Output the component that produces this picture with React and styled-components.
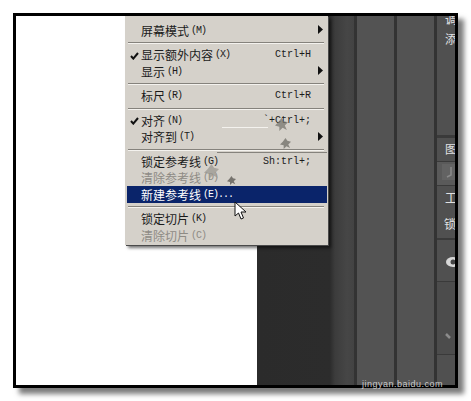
import styled, { createGlobalStyle } from "styled-components";

const GlobalStyle = createGlobalStyle`
  html, body {
    margin: 0;
    padding: 0;
    background: #fff;
  }
`;

const Page = styled.div`
  width: 471px;
  height: 401px;
  padding: 13px;
  box-sizing: border-box;
  background: #fff;
  overflow: hidden;
`;

const Frame = styled.div`
  position: relative;
  width: 445px;
  height: 375px;
  box-sizing: border-box;
  border: 3px solid #000;
  display: flex;
  box-shadow: 6px 6px 5px #7c7c7c;
`;

const Canvas = styled.div`
  flex: none;
  width: 241px;
  background: #fff;
`;

const Workspace = styled.div`
  flex: 1;
  min-width: 0;
  display: flex;
  background: #2b2b2b;
`;

const Pasteboard = styled.div`
  flex: none;
  width: 97px;
  background: linear-gradient(
    to right,
    #2b2b2b 0,
    #2c2c2c 73px,
    #3c3c3c 78px,
    #464646 90px,
    #434343 97px
  );
`;

const Divider = styled.div`
  flex: none;
  width: 3px;
  background: #333;
`;

const Column = styled.div`
  flex: none;
  width: 37px;
  background: #535353;
`;

const Panel = styled.div`
  flex: 1;
  min-width: 0;
  display: flex;
  flex-direction: column;
  background: #505050;
  overflow: hidden;
  font-family: "Noto Sans CJK SC", sans-serif;
  font-size: 12px;
  color: #e2e2e2;
`;

const PanelRow = styled.div`
  flex: none;
  height: ${(p) => p.$h}px;
  box-sizing: border-box;
  padding-left: ${(p) => p.$indent || 8}px;
  line-height: ${(p) => p.$lh || p.$h}px;
  background: ${(p) => p.$bg || "transparent"};
  border-bottom: ${(p) => (p.$line ? `${p.$line}px solid #3a3a3a` : "none")};
  white-space: nowrap;
  overflow: hidden;
`;

const PanelGlyphs = styled.div`
  margin-top: -7px;
  line-height: 20px;
`;

const PanelIcon = styled.svg`
  display: block;
`;

const Menu = styled.div`
  position: absolute;
  left: 109px;
  top: 0;
  width: 203px;
  height: 229px;
  box-sizing: border-box;
  padding: 6.3px 1px 1px 2px;
  background: #d5d1ca;
  box-shadow: 1px 1px 0 #4a4a4a, 3px 3px 3px rgba(0, 0, 0, 0.55);
  font-family: "Noto Sans CJK SC", sans-serif;
  font-size: 12px;
`;

const Item = styled.div`
  position: relative;
  height: 16.5px;
  line-height: 16px;
  display: flex;
  align-items: center;
  padding-left: 14px;
  white-space: nowrap;
  color: ${(p) => (p.$active ? "#fff" : p.$disabled ? "#8e8b85" : "#1a1a1a")};
  background: ${(p) => (p.$active ? "#0a246a" : "transparent")};
`;

const Key = styled.span`
  font-family: "Liberation Mono", monospace;
  font-size: 10px;
  letter-spacing: -1px;
  margin-left: 2px;
`;

const Shortcut = styled.span`
  position: absolute;
  right: 16px;
  font-family: "Liberation Mono", monospace;
  font-size: 10px;
`;

const Check = styled.svg`
  position: absolute;
  left: 3px;
  top: 5px;
`;

const Arrow = styled.svg`
  position: absolute;
  right: 4px;
  top: 3px;
`;

const Separator = styled.div`
  height: 8px;
  display: flex;
  align-items: center;
  &::before {
    content: "";
    flex: 1;
    margin: 0 3px 0 1px;
    height: 1px;
    background: #85827c;
    box-shadow: 0 1px 0 #f4f2ee;
  }
`;

// stray marks left over from the watermark
const Stain = styled.svg`
  position: absolute;
  left: ${(p) => p.$x}px;
  top: ${(p) => p.$y}px;
`;

const Streak = styled.div`
  position: absolute;
  left: ${(p) => p.$x}px;
  top: ${(p) => p.$y}px;
  width: ${(p) => p.$w}px;
  height: 1px;
  background: ${(p) => p.$color};
`;

const Pointer = styled.svg`
  position: absolute;
  left: 218px;
  top: 185px;
`;

const Credit = styled.span`
  position: absolute;
  left: 346px;
  bottom: -4px;
  font-family: "Liberation Sans", sans-serif;
  font-size: 9px;
  line-height: 9px;
  color: #c9c9c9;
  white-space: nowrap;
  letter-spacing: 0.5px;
`;

const MenuArrow = () => (
  <Arrow width="5" height="9" viewBox="0 0 5 9">
    <path d="M0 0 L5 4.5 L0 9 Z" fill="#111" />
  </Arrow>
);

const MenuCheck = () => (
  <Check width="9" height="8" viewBox="0 0 9 8">
    <path d="M1 4 L3.3 6.6 L8 1" fill="none" stroke="#111" strokeWidth="2" />
  </Check>
);

const Blob = ({ x, y, size = 12, color = "#77756f" }) => (
  <Stain $x={x} $y={y} width={size} height={size} viewBox="0 0 12 12">
    <path
      d="M6 0 L8 3 L12 4 L9 7 L11 11 L7 9 L4 12 L4 8 L0 7 L3 4 Z"
      fill={color}
      opacity="0.75"
    />
  </Stain>
);

export default function App() {
  return (
    <Page>
      <GlobalStyle />
      <Frame>
        <Canvas />
        <Workspace>
          <Pasteboard />
          <Divider />
          <Column />
          <Divider />
          <Column />
          <Divider />
          <Panel>
            <PanelRow $h={122} $line={3}>
              <PanelGlyphs>
                调
                <br />
                添
              </PanelGlyphs>
            </PanelRow>
            <PanelRow $h={24} $lh={22} $line={1}>图</PanelRow>
            <PanelRow $h={24} $indent={5} $line={1} $bg="#5a5a5a">
              <PanelIcon width="13" height="20" viewBox="0 0 13 20">
                <rect x="0" y="2" width="13" height="16" fill="#636363" />
                <path d="M9 5 V13 L5 15" fill="none" stroke="#8a8a8a" strokeWidth="1.5" />
              </PanelIcon>
            </PanelRow>
            <PanelRow $h={24} $lh={24}>工</PanelRow>
            <PanelRow $h={30} $lh={28} $indent={7} $line={2}>锁</PanelRow>
            <PanelRow $h={42} $indent={8} $line={1}>
              <PanelIcon width="12" height="42" viewBox="0 0 12 42">
                <ellipse cx="8" cy="22" rx="7" ry="5" fill="#d8d8d8" />
                <circle cx="8" cy="22" r="2.5" fill="#444" />
              </PanelIcon>
            </PanelRow>
            <PanelRow $h={73} $indent={8} $line={1} $bg="#4c4c4c">
              <PanelIcon width="10" height="72" viewBox="0 0 10 72">
                <path d="M1 52 L5 56" stroke="#8c8c8c" strokeWidth="2.5" />
              </PanelIcon>
            </PanelRow>
            <PanelRow $h={30} />
          </Panel>
        </Workspace>

        <Menu>
          <Item>
            屏幕模式<Key>(M)</Key>
            <MenuArrow />
          </Item>
          <Separator />
          <Item>
            <MenuCheck />
            显示额外内容<Key>(X)</Key>
            <Shortcut>Ctrl+H</Shortcut>
          </Item>
          <Item>
            显示<Key>(H)</Key>
            <MenuArrow />
          </Item>
          <Separator />
          <Item>
            标尺<Key>(R)</Key>
            <Shortcut>Ctrl+R</Shortcut>
          </Item>
          <Separator />
          <Item>
            <MenuCheck />
            对齐<Key>(N)</Key>
            <Shortcut>`+Ctrl+;</Shortcut>
          </Item>
          <Item>
            对齐到<Key>(T)</Key>
            <MenuArrow />
          </Item>
          <Separator />
          <Item>
            锁定参考线<Key>(G)</Key>
            <Shortcut>Sh:trl+;</Shortcut>
          </Item>
          <Item $disabled>
            清除参考线<Key>(D)</Key>
          </Item>
          <Item $active>
            新建参考线<Key>(E)...</Key>
          </Item>
          <Separator />
          <Item>
            锁定切片<Key>(K)</Key>
          </Item>
          <Item $disabled>
            清除切片<Key>(C)</Key>
          </Item>
        </Menu>

        <Streak $x={206} $y={111} $w={46} $color="#f4f2ee" />
        <Streak $x={201} $y={136} $w={110} $color="#85827c" />
        <Blob x={259} y={102} size={13} />
        <Blob x={264} y={122} size={11} color="#6e6c66" />
        <Blob x={188} y={148} size={15} color="#9a9790" />
        <Blob x={211} y={160} size={9} color="#55534e" />

        <Pointer width="14" height="20" viewBox="0 0 14 20">
          <path
            d="M1 1 L1 15 L4.5 12 L7 18 L9.5 17 L7 11 L12 11 Z"
            fill="#fff"
            stroke="#111"
            strokeWidth="1"
          />
        </Pointer>

        <Credit>jingyan.baidu.com</Credit>
      </Frame>
    </Page>
  );
}
